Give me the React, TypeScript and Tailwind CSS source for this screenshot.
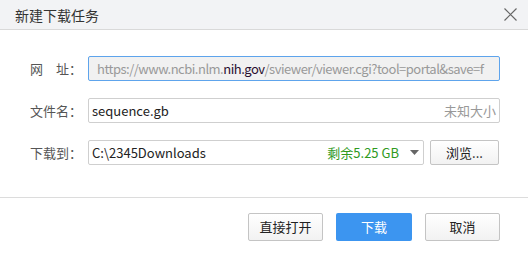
import React from "react";

const F = { fontFamily: '"Microsoft YaHei", "Noto Sans CJK SC", "Noto Sans", sans-serif' };

export default function App() {
  return (
    <div className="w-[528px] h-[256px] bg-white flex flex-col text-[13px]" style={F}>
      <div className="h-[30px] shrink-0 bg-[#f2f3f5] border-b border-[#d9d9d9] flex items-center justify-between pl-[15px] pr-[11px]">
        <span className="text-[14px] text-[#333] leading-none">新建下载任务</span>
        <svg width="13" height="13" viewBox="0 0 13 13" className="text-[#666]">
          <path d="M0.5 0.5L12.5 12.5M12.5 0.5L0.5 12.5" stroke="currentColor" strokeWidth="1.2" />
        </svg>
      </div>
      <div className="flex flex-col gap-[17px] pt-[26px] pl-[30px] pr-[28px]">
        <div className="flex items-center h-[25px]">
          <div className="w-[58px] text-[#555] flex">
            <span>网</span><span className="ml-[13px]">址：</span>
          </div>
          <div className="flex-1 h-[25px] rounded-[2px] border border-[#5ea4ec] bg-[#f1f1f1] flex items-center pl-[8px] overflow-hidden whitespace-nowrap text-[#999] tracking-[-0.5px]">
            <span>https://www.ncbi.nlm.</span><span className="text-[#2a1030]">nih.gov</span><span>/sviewer/viewer.cgi?tool=portal&amp;save=f</span>
          </div>
        </div>
        <div className="flex items-center h-[25px]">
          <div className="w-[58px] text-[#555]">文件名：</div>
          <div className="flex-1 h-[25px] rounded-[2px] border border-[#cfcfcf] bg-white flex items-center justify-between pl-[3px] pr-[3px] whitespace-nowrap">
            <span className="text-[#222]">sequence.gb</span>
            <span className="text-[#999]">未知大小</span>
          </div>
        </div>
        <div className="flex items-center h-[25px]">
          <div className="w-[58px] text-[#555]">下载到：</div>
          <div className="w-[336px] h-[25px] rounded-[2px] border border-[#cfcfcf] bg-white flex items-center pl-[3px] pr-[4px] whitespace-nowrap">
            <span className="text-[#222] flex-1">C:\2345Downloads</span>
            <span className="text-[#2f9a1e]">剩余5.25 GB</span>
            <svg width="9" height="5" viewBox="0 0 9 5" className="ml-[11px]">
              <path d="M0 0H9L4.5 5Z" fill="#666" />
            </svg>
          </div>
          <button className="ml-[6px] w-[69px] h-[25px] rounded-[2px] border border-[#c4c4c4] bg-gradient-to-b from-white to-[#f2f2f2] text-[#222] text-[13px]">浏览...</button>
        </div>
      </div>
      <div className="mt-[32px] border-t border-[#dcdcdc] flex justify-end gap-[13px] pt-[15px] pr-[28px]">
        <button className="w-[75px] h-[28px] rounded-[2px] border border-[#c4c4c4] bg-gradient-to-b from-white to-[#f2f2f2] text-[#222]">直接打开</button>
        <button className="w-[76px] h-[28px] rounded-[2px] bg-[#3c95f0] text-white">下载</button>
        <button className="w-[75px] h-[28px] rounded-[2px] border border-[#c4c4c4] bg-gradient-to-b from-white to-[#f2f2f2] text-[#222]">取消</button>
      </div>
    </div>
  );
}
